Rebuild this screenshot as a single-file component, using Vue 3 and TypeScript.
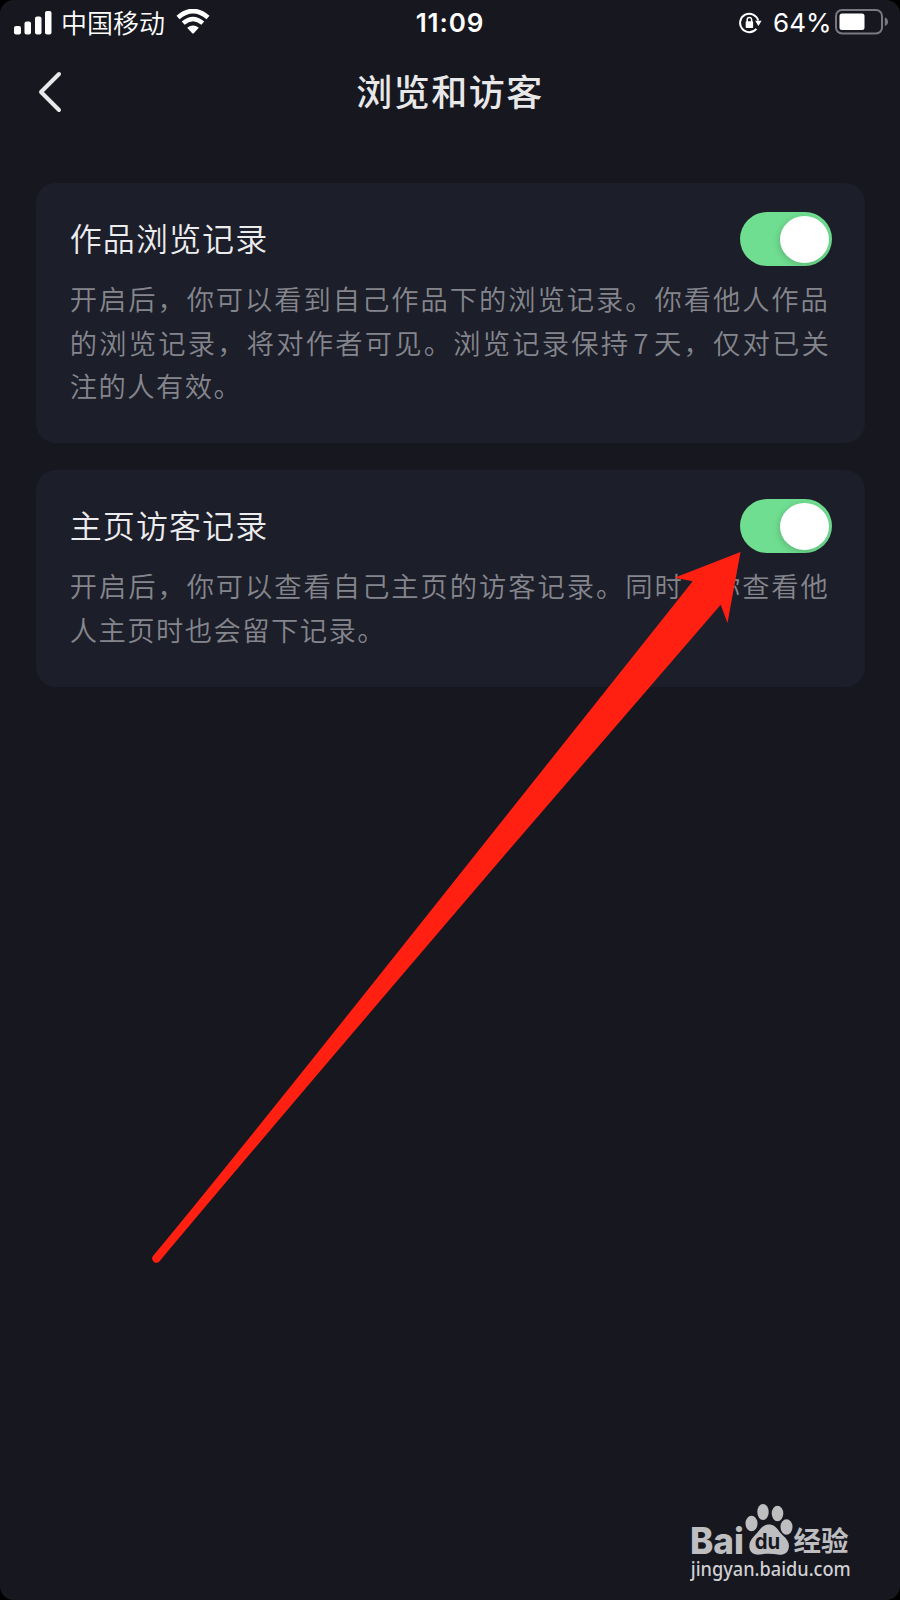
<script setup lang="ts">
import { ref } from 'vue'

interface Line {
  text: string
  spacing: number
}

interface Setting {
  title: string
  lines: Line[]
  on: boolean
}

const settings = ref<Setting[]>([
  {
    title: '作品浏览记录',
    lines: [
      { text: '开启后，你可以看到自己作品下的浏览记录。你看他人作品', spacing: 1.94 },
      { text: '的浏览记录，将对作者可见。浏览记录保持7天，仅对已关', spacing: 2.2 },
      { text: '注的人有效。', spacing: 1.45 },
    ],
    on: true,
  },
  {
    title: '主页访客记录',
    lines: [
      { text: '开启后，你可以查看自己主页的访客记录。同时，你查看他', spacing: 1.94 },
      { text: '人主页时也会留下记录。', spacing: 1.45 },
    ],
    on: true,
  },
])

// Digits get extra room on both sides, so they are rendered as separate parts.
const parts = (text: string): string[] => text.split(/(\d+)/)
const isDigits = (part: string): boolean => /^\d+$/.test(part)
</script>

<template>
  <div class="device">
    <div class="screen">
      <header class="status">
        <div class="side">
          <svg class="signal" width="38" height="24" viewBox="0 0 38 24">
            <rect x="0" y="15" width="7" height="8.5" rx="2" />
            <rect x="10.5" y="10.5" width="6.5" height="13" rx="2" />
            <rect x="21" y="5.5" width="6.5" height="18" rx="2" />
            <rect x="31" y="0" width="6.5" height="23.5" rx="2" />
          </svg>
          <span class="carrier">中国移动</span>
          <svg class="wifi" width="34" height="25" viewBox="0 0 34 25">
            <path d="M2 8.5 Q17 -4.5 32 8.5" stroke-width="4.6" />
            <path d="M7.2 14.2 Q17 5.8 26.8 14.2" stroke-width="4.4" />
            <path class="dot" d="M11.2 18.7 Q17 14.2 22.8 18.7 L18 23.9 Q17 24.9 16 23.9 Z" />
          </svg>
        </div>
        <span class="time">11:09</span>
        <div class="side right">
          <svg class="lock" width="24" height="22" viewBox="0 0 24 22">
            <path class="ring" d="M19.2 8.6 A9.2 9.2 0 1 0 17.4 16.8" />
            <path d="M16.2 8.8 H22.6 L19.4 14 Z" />
            <rect x="6.7" y="9.3" width="7.4" height="6.8" rx="0.8" />
            <path class="shackle" d="M8.2 10 V7.6 A2.2 2.2 0 0 1 12.6 7.6 V10" />
          </svg>
          <span class="percent">64%</span>
          <svg class="battery" width="54" height="26" viewBox="0 0 54 26">
            <rect class="shell" x="1" y="1" width="46" height="23.5" rx="6" />
            <rect x="4.5" y="4.5" width="25" height="16.5" rx="2.5" />
            <path class="cap" d="M49.8 8.6 Q53 9.5 53 12.8 Q53 16 49.8 17 Z" />
          </svg>
        </div>
      </header>

      <nav class="nav">
        <svg class="back" width="24" height="42" viewBox="0 0 24 42">
          <path d="M21 3 L3 21 L21 39" />
        </svg>
        <h1>浏览和访客</h1>
      </nav>

      <main class="cards">
        <section v-for="item in settings" :key="item.title" class="card">
          <div class="row">
            <h2>{{ item.title }}</h2>
            <button
              class="toggle"
              :class="{ on: item.on }"
              role="switch"
              :aria-checked="item.on"
              @click="item.on = !item.on"
            >
              <span class="knob"></span>
            </button>
          </div>
          <p>
            <span
              v-for="line in item.lines"
              :key="line.text"
              class="line"
              :style="{ letterSpacing: line.spacing + 'px' }"
            ><span
              v-for="(part, i) in parts(line.text)"
              :key="i"
              :class="{ digits: isDigits(part) }"
            >{{ part }}</span></span>
          </p>
        </section>
      </main>

      <svg class="arrow" width="900" height="1600" viewBox="0 0 900 1600">
        <path
          d="M740.5 552 L674.5 577.8 L692.7 581.2 L479 850 Q230.5 1163 153 1256 A4.2 4.2 0 0 0 159.4 1261.4 Q283 1114 509 850 L720.7 604.7 L727.5 623 Z"
        />
      </svg>

      <svg class="watermark" width="180" height="90" viewBox="0 0 180 90">
        <text class="latin" x="0" y="50" textLength="54" lengthAdjust="spacingAndGlyphs">Bai</text>
        <ellipse cx="61.5" cy="19.5" rx="6" ry="7.8" />
        <ellipse cx="73" cy="8" rx="5.7" ry="8" />
        <ellipse cx="87.5" cy="9.5" rx="5.8" ry="7.8" />
        <ellipse cx="96.5" cy="23" rx="6" ry="7.7" />
        <path
          d="M79 20.5 C86 20.5 88 27 93 31.5 C98 36 100 40 98.5 45 C97 50 92 51.3 88 50.6 C82 49.6 76 49.6 70 50.6 C65 51.3 60 49 59.4 43.5 C58.8 37 63 33.5 67 29 C71 24.5 73 20.5 79 20.5 Z"
        />
        <text class="du" x="64.8" y="45.3" textLength="25.5" lengthAdjust="spacingAndGlyphs">du</text>
        <text class="cjk" x="103.6" y="47.2" textLength="55" lengthAdjust="spacingAndGlyphs">经验</text>
        <text class="url" x="0.8" y="71.8" textLength="160" lengthAdjust="spacingAndGlyphs">jingyan.baidu.com</text>
      </svg>
    </div>
  </div>
</template>

<style>
body {
  margin: 0;
  background: #000;
}
</style>

<style scoped>
.device {
  width: 900px;
  height: 1600px;
  background: #000;
  overflow: hidden;
  font-family: Inter, "Noto Sans CJK SC", sans-serif;
}
.screen {
  position: relative;
  width: 900px;
  height: 1600px;
  border-radius: 14px;
  background: #171720;
  overflow: hidden;
}
.status {
  display: grid;
  grid-template-columns: 1fr auto 1fr;
  align-items: center;
  height: 45px;
  padding: 0 11px 0 14px;
  color: #fff;
  fill: #fff;
}
.side {
  display: flex;
  align-items: center;
}
.right {
  justify-content: flex-end;
}
.signal {
  margin-right: 9px;
}
.carrier {
  font: 350 26px/44px "Noto Sans CJK SC", sans-serif;
  width: 106px;
  margin-bottom: 2px;
}
.wifi {
  margin: 0 0 3px 9px;
}
.wifi path {
  fill: none;
  stroke: #fff;
}
.wifi .dot {
  fill: #fff;
  stroke: none;
}
.time {
  font: 600 26px/44px Inter, sans-serif;
  letter-spacing: 0.9px;
  margin: 0 3px 1px 0;
}
.lock {
  margin-right: 10px;
}
.lock .ring {
  fill: none;
  stroke: #fff;
  stroke-width: 2;
}
.lock .shackle {
  fill: none;
  stroke: #fff;
  stroke-width: 1.5;
}
.percent {
  font: 400 26px/44px Inter, sans-serif;
  margin: 0 3.5px 1px 0;
}
.battery {
  margin-bottom: 2px;
}
.battery .shell {
  fill: none;
  stroke: #797981;
  stroke-width: 2;
}
.battery .cap {
  fill: #797981;
}
.nav {
  display: grid;
  grid-template-columns: 120px 1fr 120px;
  align-items: center;
  height: 94px;
}
.back {
  margin: 0 0 1px 38px;
  fill: none;
  stroke: #e8e8ea;
  stroke-width: 4;
  stroke-linecap: round;
  stroke-linejoin: round;
}
h1 {
  margin: 0 0 4px;
  text-align: center;
  font: 500 36px/60px "Noto Sans CJK SC", sans-serif;
  letter-spacing: 1.5px;
  color: #e8e8e9;
}
.cards {
  display: grid;
  gap: 27px;
  padding: 43.6px 35.5px 0;
}
.card {
  box-sizing: border-box;
  padding: 29.5px 32.5px 35.5px 34.2px;
  border-radius: 20px;
  background: #1c1e29;
}
.row {
  display: flex;
  justify-content: space-between;
  align-items: center;
  height: 54px;
}
h2 {
  margin: 0 0 5px;
  font: 350 32px/50px "Noto Sans CJK SC", sans-serif;
  letter-spacing: 1.1px;
  color: #ececee;
}
.toggle {
  display: flex;
  align-items: center;
  width: 92px;
  height: 54px;
  padding: 0 3.5px;
  border: 0;
  border-radius: 27px;
  background: #3a3b45;
}
.toggle.on {
  justify-content: flex-end;
  background: #70de91;
}
.knob {
  width: 49px;
  height: 47px;
  border-radius: 50%;
  background: #fff;
  box-shadow: -1px 2px 7px rgba(0, 0, 0, 0.18);
}
p {
  margin: 11px 0 0;
  font: 350 27.3px/43.4px "Noto Sans CJK SC", sans-serif;
  color: #85868d;
}
.line {
  display: block;
  white-space: nowrap;
}
.digits {
  padding: 0 3.3px;
}
.arrow {
  position: absolute;
  left: 0;
  top: 0;
  fill: #ff2012;
  pointer-events: none;
}
.watermark {
  position: absolute;
  left: 690px;
  top: 1504px;
  fill: #bebec1;
}
.latin {
  font: 800 37px Inter, sans-serif;
}
.du {
  font: 700 22px Inter, sans-serif;
  fill: #171720;
}
.cjk {
  font: 700 27.5px "Noto Sans CJK SC", sans-serif;
}
.url {
  font: 500 20.5px "Noto Sans", sans-serif;
  fill: #d0d0d3;
}
</style>
